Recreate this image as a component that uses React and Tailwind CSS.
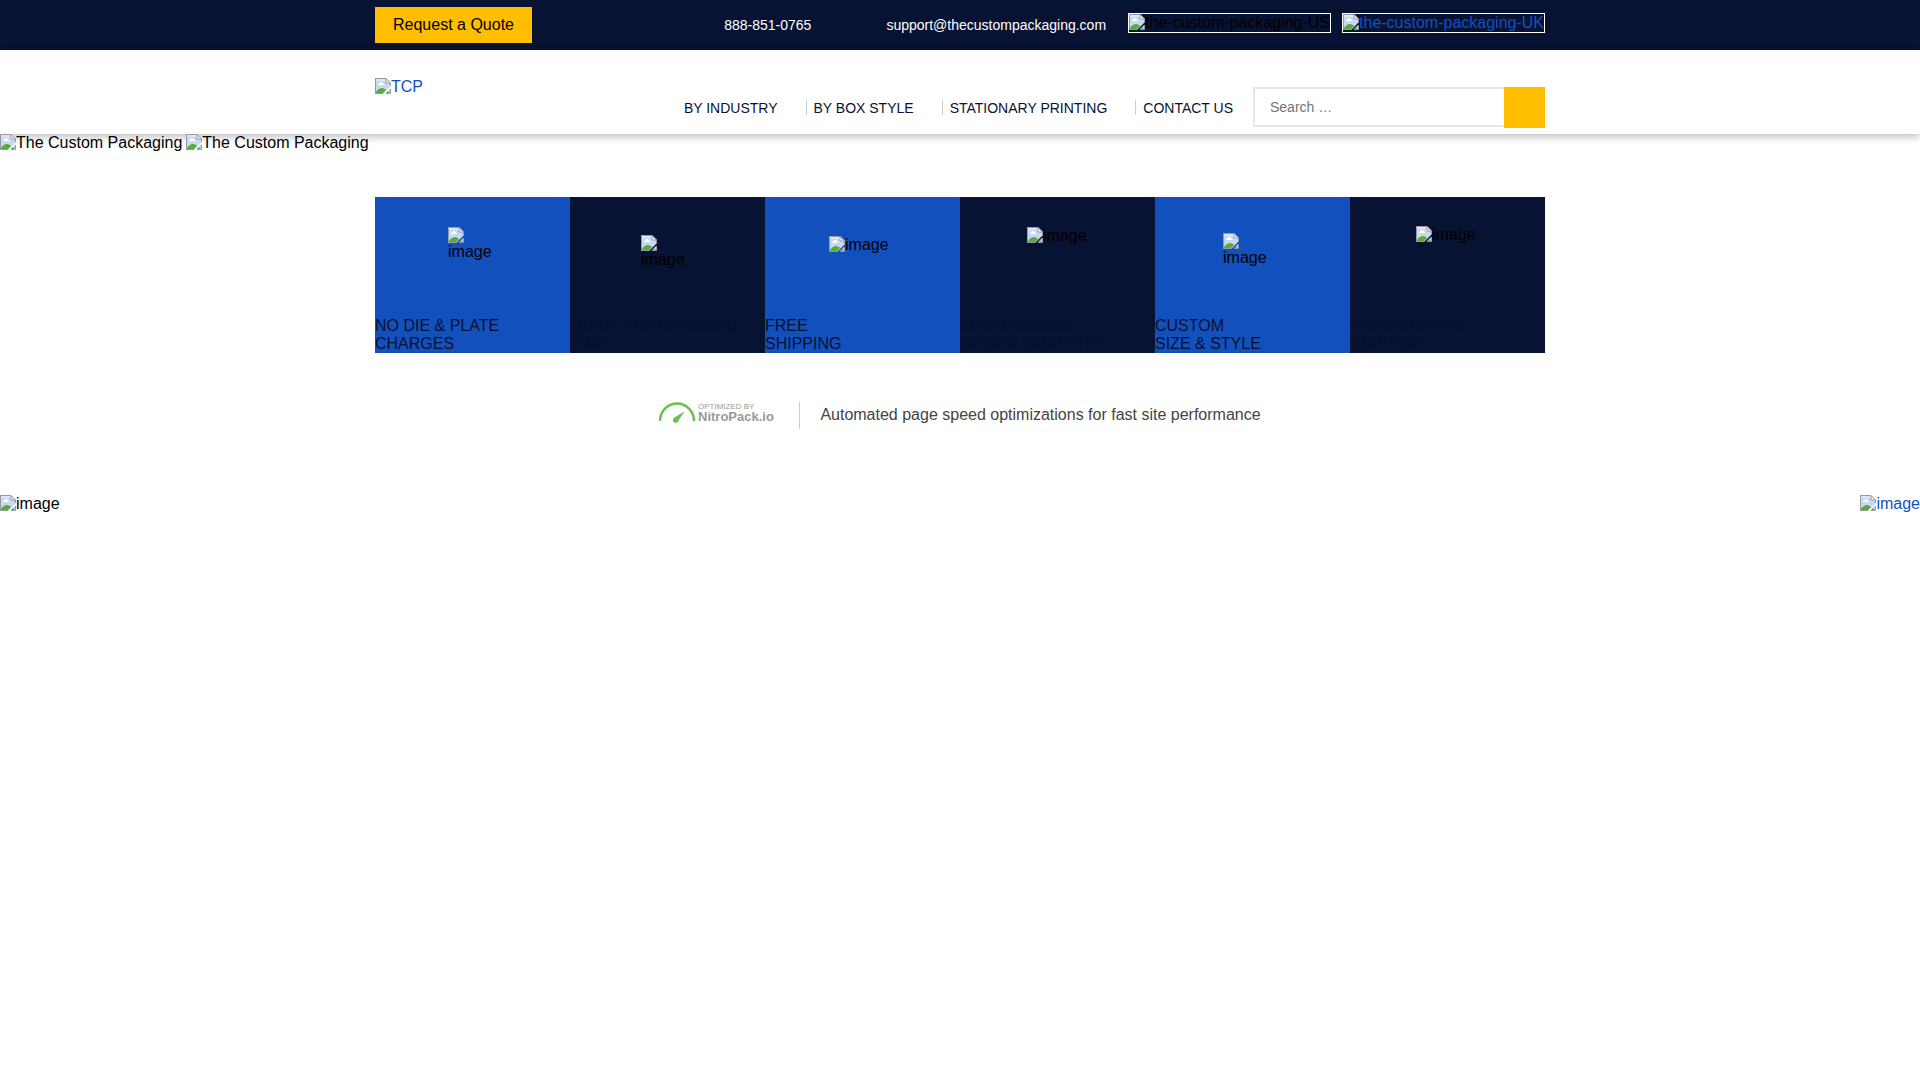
import clsx from "clsx";

const FEATURES = [
  { lines: ["NO DIE & PLATE", "CHARGES"], box: "pt-[30px] pl-[73px]", stacked: true },
  { lines: ["QUICK TURNAROUND", "TIME"], box: "pt-[38px] pl-[71px]", stacked: true },
  { lines: ["FREE", "SHIPPING"], box: "pt-[39px] pl-16" },
  { lines: ["LOW MINIMUM", "ORDER QUANTITY"], box: "pt-[30px] pl-[67px]" },
  { lines: ["CUSTOM", "SIZE & STYLE"], box: "pt-9 pl-[68px]", stacked: true },
  { lines: ["FREE GRAPHIC", "SUPPORT"], box: "pt-[29px] pl-[66px]" },
];

const MENU = [
  { label: "BY INDUSTRY", hasSub: true },
  { label: "BY BOX STYLE", hasSub: true },
  { label: "STATIONARY PRINTING", hasSub: true },
  { label: "CONTACT US" },
];

function MissingIcon() {
  return (
    <svg width="16" height="16" viewBox="0 0 16 16" className="block shrink-0" aria-hidden="true">
      <path d="M0 0H11L16 5V8L8 16H0Z" fill="#c8d9f5" />
      <path d="M1 1H11V3H1Z" fill="#dce7f9" />
      <path d="M3 7V6h1V5h1V4h2v1h1v1h1v1Z" fill="#fff" />
      <path d="M1 15V14C3 11 5 10 7 10C9 10 10 11 11 12L8 15Z" fill="#55ac37" />
      <path d="M11 15L15 11V15Z" fill="#b5cdec" />
      <path d="M11 15L13 13L14 15Z" fill="#55ac37" />
      <path d="M11 1L15 5H11Z" fill="#fff" />
      <path d="M0.5 16V0.5H11L15.5 5V8M11 1V5H15.5M0 15.5H8M11 15.5H15.5V11" fill="none" stroke="#999" />
    </svg>
  );
}

// Placeholder for a picture with its alt text
function Picture({ alt, className, stacked }) {
  return (
    <span className={clsx("inline-flex", stacked ? "flex-col" : "items-start", className)}>
      <MissingIcon />
      <span className={stacked ? undefined : "whitespace-nowrap"}>{alt}</span>
    </span>
  );
}

function TopBar() {
  return (
    <div className="bg-[#081233]">
      <div className="mx-auto flex h-[50px] max-w-[1170px] items-center">
        <button type="button" className="h-9 w-[157px] bg-[#ffbf00] text-base leading-[18px] text-black">
          Request a Quote
        </button>
        <div className="ml-auto flex items-center text-sm text-white">
          <a href="tel:888-851-0765" className="mr-[75px]">
            888-851-0765
          </a>
          <a href="mailto:support@thecustompackaging.com">support@thecustompackaging.com</a>
        </div>
        <div className="ml-[22px] flex gap-[11px] self-start pt-[13px] leading-[18px]">
          <Picture alt="the-custom-packaging-US" className="border border-white text-black" />
          <a href="#uk" className="flex text-[#1250be]">
            <Picture alt="the-custom-packaging-UK" className="border border-white" />
          </a>
        </div>
      </div>
    </div>
  );
}

function Header() {
  return (
    <header className="relative bg-white shadow-[0_3px_8px_rgba(0,0,0,0.25)]">
      <div className="mx-auto flex h-[84px] max-w-[1170px]">
        <a href="#home" className="mt-7 self-start text-[#1250be]">
          <Picture alt="TCP" />
        </a>
        <nav className="mt-[50px] ml-auto">
          <ul className="flex text-sm leading-[15px] text-[#081233]">
            {MENU.map(({ label, hasSub }) => (
              <li key={label} className={clsx("h-[15px] pt-px", hasSub && "mr-[7px] border-r border-[#ccc] pr-7")}>
                <a href="#menu" className="block">
                  {label}
                </a>
              </li>
            ))}
          </ul>
        </nav>
        <form className="mt-[37px] ml-5 flex items-start" onSubmit={(e) => e.preventDefault()}>
          <input
            type="search"
            aria-label="Search"
            placeholder="Search …"
            className="h-10 w-[251px] border-2 border-r-0 border-[#e6e6e6] px-[15px] text-sm outline-none placeholder:text-[#757575]"
          />
          <button type="submit" aria-label="Search" className="h-[41px] w-[41px] bg-[#ffbf00]" />
        </form>
      </div>
    </header>
  );
}

function Features() {
  return (
    <section className="mx-auto mt-[45px] grid max-w-[1170px] grid-cols-6">
      {FEATURES.map(({ lines, box, stacked }, i) => (
        <div
          key={lines[0]}
          className={clsx("flex h-39 flex-col justify-between", i % 2 ? "bg-[#081233]" : "bg-[#1250be]")}
        >
          <div className={box}>
            <Picture alt="image" stacked={stacked} />
          </div>
          <p className="text-[#07112f]">
            {lines[0]}
            <br />
            {lines[1]}
          </p>
        </div>
      ))}
    </section>
  );
}

function NitroBadge() {
  return (
    <div className="mt-[49px] flex items-start justify-center">
      <svg width="118" height="22" viewBox="0 0 118 22" role="img" aria-label="Optimized by NitroPack.io">
        <path d="M1 19A16.5 17 0 0 1 35 19" fill="none" stroke="#6cc04a" strokeWidth="2.5" />
        <path d="M25.5 9.5L19.5 18.5A2.8 2.8 0 1 1 15.5 15.5Z" fill="#6cc04a" />
        <text x="39" y="7" fontSize="8" fill="#999">
          OPTIMIZED BY
        </text>
        <text x="39" y="19" fontSize="13" fontWeight="700" fill="#999">
          NitroPack.io
        </text>
      </svg>
      <p className="ml-[22px] h-[27px] border-l border-[#ccc] pt-[3px] pl-5 leading-[19px] text-[#444]">
        Automated page speed optimizations for fast site performance
      </p>
    </div>
  );
}

export default function App() {
  return (
    <div className="min-h-screen bg-white font-['Liberation_Sans',Arial,sans-serif] text-base leading-[18px] text-black">
      <TopBar />
      <Header />
      <main>
        <div className="relative flex gap-1">
          <Picture alt="The Custom Packaging" />
          <Picture alt="The Custom Packaging" />
        </div>
        <Features />
        <NitroBadge />
        <div className="mt-[66px] flex justify-between">
          <Picture alt="image" />
          <a href="#chat" className="text-[#1250be]">
            <Picture alt="image" />
          </a>
        </div>
      </main>
    </div>
  );
}
